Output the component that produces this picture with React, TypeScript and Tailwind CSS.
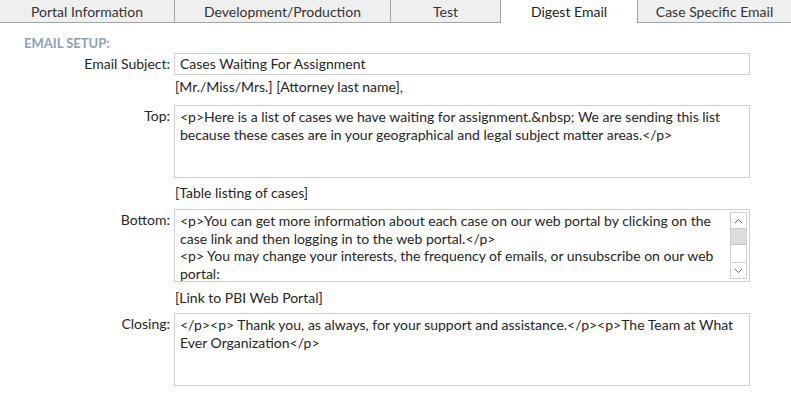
import React from "react";

const tabs = [
  { label: "Portal Information", w: "w-[175px]", active: false },
  { label: "Development/Production", w: "w-[216px]", active: false },
  { label: "Test", w: "w-[110px]", active: false },
  { label: "Digest Email", w: "w-[136px]", active: true },
  { label: "Case Specific Email", w: "w-[154px]", active: false },
];

function Label({ children }: { children: React.ReactNode }) {
  return <div className="w-[174px] shrink-0 pr-[4px] text-right leading-[18px]">{children}</div>;
}

function Box({ lines, scroll }: { lines: string[]; scroll?: boolean }) {
  return (
    <div className="relative h-[73px] w-[576px] overflow-hidden border border-[#cfcfcf] bg-white pl-[5px] pt-[2px]">
      {lines.map((l, i) => (
        <div key={i} className="whitespace-pre leading-[17.5px]">
          {l}
        </div>
      ))}
      {scroll && (
        <div className="absolute right-[2px] top-[2px] flex h-[67px] w-[17px] flex-col border border-[#cfcfcf] bg-white">
          <div className="flex h-[16px] items-center justify-center border-b border-[#cfcfcf]">
            <svg width="9" height="6" viewBox="0 0 9 6">
              <path d="M1 5 L4.5 1.5 L8 5" fill="none" stroke="#666" strokeWidth="1" />
            </svg>
          </div>
          <div className="h-[16px] border-b border-[#c4c4c4] bg-[#dddddd]" />
          <div className="flex-1" />
          <div className="flex h-[16px] items-center justify-center border-t border-[#cfcfcf]">
            <svg width="9" height="6" viewBox="0 0 9 6">
              <path d="M1 1 L4.5 4.5 L8 1" fill="none" stroke="#666" strokeWidth="1" />
            </svg>
          </div>
        </div>
      )}
    </div>
  );
}

export default function App() {
  return (
    <div className="h-[409px] w-[791px] overflow-hidden bg-white font-['Lato',sans-serif] text-[14px] text-[#262626]">
      <div className="flex h-[23px]">
        {tabs.map((t) =>
          t.active ? (
            <div key={t.label} className={`${t.w} flex items-start justify-center pt-[1px] text-[#222]`}>
              {t.label}
            </div>
          ) : (
            <div
              key={t.label}
              className={`${t.w} flex items-center justify-center border-b border-[#a0a4a8] bg-[#efefef] text-[#333] ${
                t.label === "Case Specific Email" ? "border-l" : "border-r"
              }`}
            >
              {t.label}
            </div>
          )
        )}
      </div>

      <div className="pl-[24px] pt-[12px] text-[13px] font-bold leading-[16px] text-[#8da0ba]">EMAIL SETUP:</div>

      <div className="mt-[2px] flex items-center">
        <Label>Email Subject:</Label>
        <div className="h-[22px] w-[576px] border border-[#cfcfcf] pl-[5px] leading-[20px]">Cases Waiting For Assignment</div>
      </div>

      <div className="mt-[3px] pl-[175px] leading-[18px]">[Mr./Miss/Mrs.] [Attorney last name],</div>

      <div className="mt-[9px] flex">
        <div className="pt-[2px]">
          <Label>Top:</Label>
        </div>
        <Box
          lines={[
            "<p>Here is a list of cases we have waiting for assignment.&nbsp; We are sending this list",
            "because these cases are in your geographical and legal subject matter areas.</p>",
          ]}
        />
      </div>

      <div className="mt-[6px] pl-[175px] leading-[18px]">[Table listing of cases]</div>

      <div className="mt-[7px] flex">
        <div className="pt-[2px]">
          <Label>Bottom:</Label>
        </div>
        <Box
          scroll
          lines={[
            "<p>You can get more information about each case on our web portal by clicking on the",
            "case link and then logging in to the web portal.</p>",
            "<p> You may change your interests, the frequency of emails, or unsubscribe on our web",
            "portal:",
          ]}
        />
      </div>

      <div className="mt-[7px] pl-[175px] leading-[18px]">[Link to PBI Web Portal]</div>

      <div className="mt-[6px] flex">
        <div className="pt-[2px]">
          <Label>Closing:</Label>
        </div>
        <Box
          lines={[
            "</p><p> Thank you, as always, for your support and assistance.</p><p>The Team at What",
            "Ever Organization</p>",
          ]}
        />
      </div>
    </div>
  );
}
